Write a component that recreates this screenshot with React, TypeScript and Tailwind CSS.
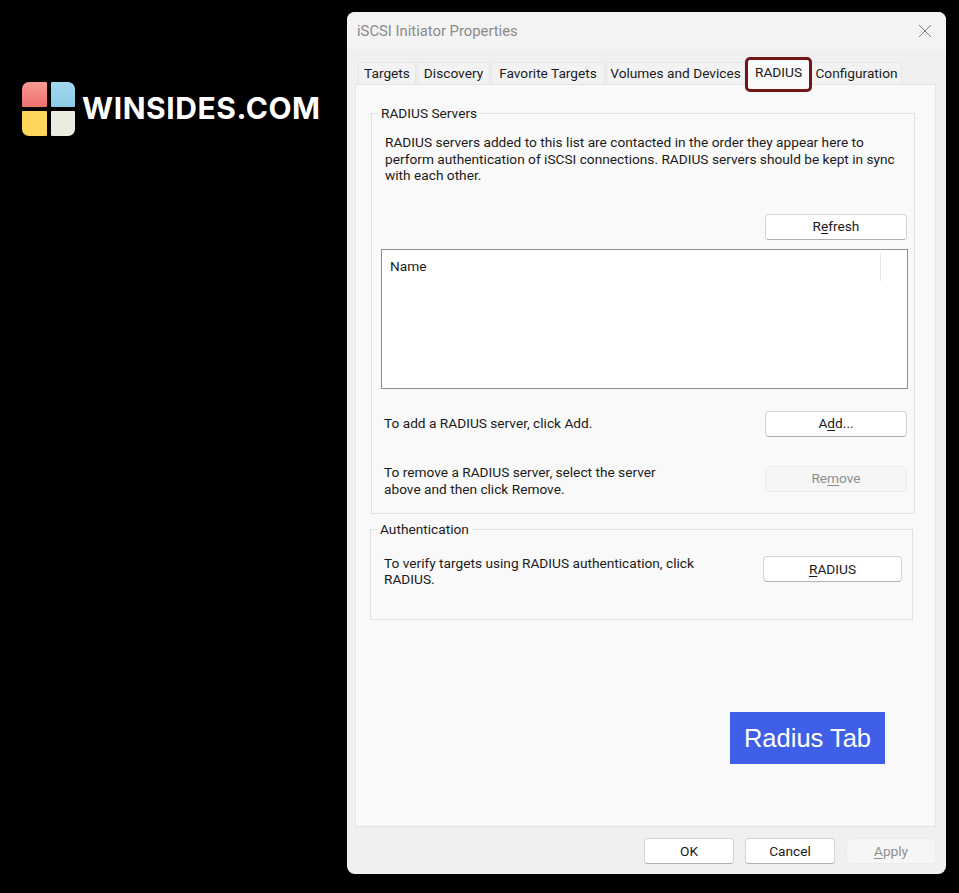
const uiFont = "font-['Roboto',sans-serif]";

function Mnemonic({ before, letter, after }: { before?: string; letter: string; after?: string }) {
  return (
    <span>
      {before}
      <span className="underline underline-offset-2">{letter}</span>
      {after}
    </span>
  );
}

function WinButton({
  className,
  disabled,
  children,
}: {
  className: string;
  disabled?: boolean;
  children: React.ReactNode;
}) {
  const look = disabled
    ? "border-[#ececec] bg-[#f6f6f6] text-[#8f8f8f]"
    : "border-[#d4d4d4] border-b-[#b0b0b0] bg-white text-[#1a1a1a]";
  return (
    <button
      type="button"
      disabled={disabled}
      className={`flex h-[26px] shrink-0 items-center justify-center rounded-[4px] border text-[13.7px] ${look} ${className}`}
    >
      {children}
    </button>
  );
}

function Logo() {
  return (
    <div className="flex items-center gap-[7px]">
      <div className="grid h-[54px] w-[53px] grid-cols-2 grid-rows-2 gap-[4px]">
        <div className="rounded-[1px] rounded-tl-[7px] bg-gradient-to-b from-[#f79a94] to-[#ee6f6c]" />
        <div className="rounded-[1px] rounded-tr-[7px] bg-gradient-to-b from-[#a3d8f0] to-[#8ccbe6]" />
        <div className="rounded-[1px] rounded-bl-[7px] bg-[#ffd65c]" />
        <div className="rounded-[1px] rounded-br-[7px] bg-[#ecebdf]" />
      </div>
      <span className="-mt-[3px] font-['Inter',sans-serif] text-[30px] font-bold leading-none tracking-[0.55px] text-white">
        WINSIDES.COM
      </span>
    </div>
  );
}

const tabs = [
  { label: "Targets", width: "w-[58px]" },
  { label: "Discovery", width: "w-[73px]" },
  { label: "Favorite Targets", width: "w-[114px]" },
  { label: "Volumes and Devices", width: "w-[139px]" },
];

function Tabs() {
  return (
    <div className="flex h-[22px] items-end gap-[1px] pl-[11px]">
      {tabs.map((t) => (
        <div
          key={t.label}
          className={`flex h-[22px] items-center justify-center whitespace-nowrap border border-b-0 border-[#e6e6e6] bg-[#f2f2f2] text-[13.7px] text-[#1a1a1a] ${t.width}`}
        >
          {t.label}
        </div>
      ))}
      <div className="relative z-10 -mb-[1px] ml-[1px] flex h-[25px] w-[63px] items-start justify-center bg-[#f9f9f9] pt-[2px] text-[13.7px] text-[#1a1a1a]">
        RADIUS
        <div className="absolute -left-[2px] -right-[2px] -top-[3px] bottom-[-7px] rounded-[5px] border-[3px] border-[#751518]" />
      </div>
      <div className="flex h-[22px] w-[91px] items-center justify-center border border-b-0 border-[#e6e6e6] bg-[#f2f2f2] text-[13.7px] text-[#1a1a1a]">
        Configuration
      </div>
    </div>
  );
}

export default function App() {
  return (
    <div className={`flex h-[893px] w-[959px] overflow-hidden bg-black ${uiFont}`}>
      <div className="w-[347px] shrink-0 pl-[22px] pt-[82px]">
        <Logo />
      </div>

      <div className="mt-[12px] flex h-[862px] w-[599px] flex-col rounded-[8px] bg-[#f0f0f0]">
        <div className="flex h-[38px] shrink-0 items-center justify-between rounded-t-[8px] bg-[#f3f3f3] pl-[10px] pr-[14px]">
          <span className="text-[14.8px] text-[#8a8a8a]">iSCSI Initiator Properties</span>
          <svg width="14" height="14" viewBox="0 0 14 14" className="stroke-[#7d7d7d]">
            <path d="M1 1 L13 13 M13 1 L1 13" strokeWidth="1" fill="none" />
          </svg>
        </div>

        <div className="mt-[12px] shrink-0">
          <Tabs />
        </div>

        <div className="mx-[8px] flex h-[743px] w-[581px] shrink-0 flex-col border border-[#e5e5e5] bg-[#f9f9f9] text-[13.7px] text-[#1a1a1a]">
          <fieldset className="ml-[15px] mt-[20px] h-[409px] w-[544px] border border-[#e0e0e0]">
            <legend className="ml-[6px] px-[3px] leading-[16px]">RADIUS Servers</legend>
            <p className="ml-[13px] mt-[13px] w-[525px] leading-[16.5px]">
              RADIUS servers added to this list are contacted in the order they appear here to
              perform authentication of iSCSI connections. RADIUS servers should be kept in sync
              with each other.
            </p>
            <div className="mt-[30px] flex justify-end pr-[7px]">
              <WinButton className="w-[142px]">
                <Mnemonic before="R" letter="e" after="fresh" />
              </WinButton>
            </div>
            <div className="ml-[9px] mt-[9px] h-[140px] w-[527px] border-[1.5px] border-[#8c9096] bg-white">
              <div className="flex h-[34px] items-center justify-between pl-[8px] pr-[26px]">
                <span>Name</span>
                <div className="h-[28px] w-px bg-[#e5e5e5]" />
              </div>
            </div>
            <div className="mt-[22px] flex items-center justify-between pl-[12px] pr-[7px]">
              <span>To add a RADIUS server, click Add.</span>
              <WinButton className="w-[142px]">
                <Mnemonic before="A" letter="d" after="d..." />
              </WinButton>
            </div>
            <div className="mt-[29px] flex items-start justify-between pl-[12px] pr-[7px]">
              <span className="-mt-[2px] w-[300px] leading-[17px]">
                To remove a RADIUS server, select the server above and then click Remove.
              </span>
              <WinButton className="w-[142px]" disabled>
                <Mnemonic before="Re" letter="m" after="ove" />
              </WinButton>
            </div>
          </fieldset>

          <fieldset className="ml-[14px] mt-[7px] h-[99px] w-[543px] border border-[#e0e0e0]">
            <legend className="ml-[6px] px-[3px] leading-[16px]">Authentication</legend>
            <div className="mt-[19px] flex items-start justify-between pl-[13px] pr-[10px]">
              <span className="-mt-[1px] w-[320px] leading-[16px]">
                To verify targets using RADIUS authentication, click RADIUS.
              </span>
              <WinButton className="w-[139px]">
                <Mnemonic letter="R" after="ADIUS" />
              </WinButton>
            </div>
          </fieldset>

          <div className="ml-[374px] mt-[92px] flex h-[52px] w-[155px] items-center justify-center bg-[#3f5fe8] font-['Liberation_Sans',sans-serif] text-[25.5px] text-white">
            Radius Tab
          </div>
        </div>

        <div className="mt-[11px] flex shrink-0 justify-end gap-[11px] pr-[10px]">
          <WinButton className="w-[90px]">OK</WinButton>
          <WinButton className="w-[90px]">Cancel</WinButton>
          <WinButton className="w-[90px]" disabled>
            <Mnemonic letter="A" after="pply" />
          </WinButton>
        </div>
      </div>
    </div>
  );
}
